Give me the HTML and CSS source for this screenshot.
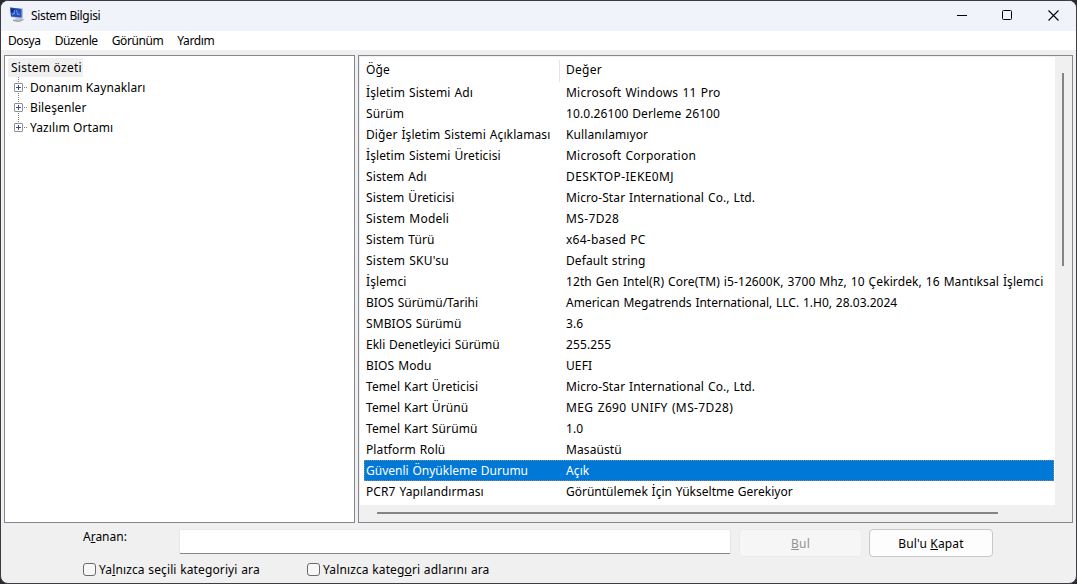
FILE: index.html
```html
<!DOCTYPE html>
<html lang="tr">
<head>
    <meta charset="UTF-8">
    <meta name="viewport" content="width=device-width, initial-scale=1.0">
    <title>Sistem Bilgisi</title>
    <link rel="stylesheet" href="styles.css">
</head>
<body>
    <div class="window">

        <!-- title bar -->
        <header class="titlebar">
            <svg class="app-icon" width="16" height="16" viewBox="0 0 16 16">
                <path d="M7 11l5-1 2.500 2.500-4 2.500-6-1z" fill="#c3c6cf"/>
                <path d="M4 12.500l6 1.300 4.500-1.800v1L10 15l-6-1z" fill="#9a9da8"/>
                <path d="M1 .5l11 1.500 2-1v9.500L12 12 2 10z" fill="#b4bdd6"/>
                <path d="M1 .5l11.500 1.300v8.700L2 9.500z" fill="#2450bd"/>
                <path d="M2 1.500l4 .5-1 4-3-1z" fill="#102a80"/>
                <path d="M5.500 3l-1 4.500M7.500 3.500l1 4 2.500-.5M3 7.500l3-1.500" stroke="#7fa3e8" stroke-width=".9" fill="none"/>
            </svg>
            <span class="title">Sistem Bilgisi</span>
            <div class="controls">
                <svg width="46" height="30" viewBox="0 0 46 30"><path d="M18 14.500h10" stroke="#000"/></svg>
                <svg width="46" height="30" viewBox="0 0 46 30"><rect x="17.500" y="9.500" width="9" height="9" rx="1" fill="none" stroke="#000"/></svg>
                <svg width="46" height="30" viewBox="0 0 46 30"><path d="M17.500 9.500l10 10M27.500 9.500l-10 10" stroke="#000" stroke-width="1.100"/></svg>
            </div>
        </header>

        <!-- menu -->
        <nav class="menu">
            <a>Dosya</a>
            <a>Düzenle</a>
            <a>Görünüm</a>
            <a>Yardım</a>
        </nav>

        <main class="panes">
            <!-- category tree -->
            <div class="tree">
                <span class="tree-root">Sistem özeti</span>
                <ul>
                    <li><i class="plus"></i><span>Donanım Kaynakları</span></li>
                    <li><i class="plus"></i><span>Bileşenler</span></li>
                    <li><i class="plus"></i><span>Yazılım Ortamı</span></li>
                </ul>
            </div>

            <!-- details list -->
            <div class="details">
                <div class="list">
                    <div class="row head"><span>Öğe</span><span class="loose">Değer</span></div>
                    <div class="row"><span>İşletim Sistemi Adı</span><span class="loose">Microsoft Windows 11 Pro</span></div>
                    <div class="row"><span>Sürüm</span><span>10.0.26100 Derleme 26100</span></div>
                    <div class="row"><span>Diğer İşletim Sistemi Açıklaması</span><span>Kullanılamıyor</span></div>
                    <div class="row"><span>İşletim Sistemi Üreticisi</span><span class="loose">Microsoft Corporation</span></div>
                    <div class="row"><span>Sistem Adı</span><span class="looser">DESKTOP-IEKE0MJ</span></div>
                    <div class="row"><span>Sistem Üreticisi</span><span>Micro-Star International Co., Ltd.</span></div>
                    <div class="row"><span class="loose">Sistem Modeli</span><span class="looser">MS-7D28</span></div>
                    <div class="row"><span>Sistem Türü</span><span class="loose">x64-based PC</span></div>
                    <div class="row"><span class="loose">Sistem SKU'su</span><span>Default string</span></div>
                    <div class="row"><span>İşlemci</span><span>12th Gen Intel(R) Core(TM) i5-12600K, 3700 Mhz, 10 Çekirdek, 16 Mantıksal İşlemci</span></div>
                    <div class="row"><span class="tight">BIOS Sürümü/Tarihi</span><span class="tight">American Megatrends International, LLC. 1.H0, 28.03.2024</span></div>
                    <div class="row"><span>SMBIOS Sürümü</span><span>3.6</span></div>
                    <div class="row"><span class="tight">Ekli Denetleyici Sürümü</span><span>255.255</span></div>
                    <div class="row"><span>BIOS Modu</span><span>UEFI</span></div>
                    <div class="row"><span>Temel Kart Üreticisi</span><span>Micro-Star International Co., Ltd.</span></div>
                    <div class="row"><span>Temel Kart Ürünü</span><span class="looser">MEG Z690 UNIFY (MS-7D28)</span></div>
                    <div class="row"><span>Temel Kart Sürümü</span><span>1.0</span></div>
                    <div class="row"><span>Platform Rolü</span><span>Masaüstü</span></div>
                    <div class="row selected"><span class="tight">Güvenli Önyükleme Durumu</span><span>Açık</span></div>
                    <div class="row"><span>PCR7 Yapılandırması</span><span class="tight">Görüntülemek İçin Yükseltme Gerekiyor</span></div>
                </div>
                <div class="scroll-y"><div class="thumb"></div></div>
                <div class="scroll-x"><div class="thumb"></div></div>
            </div>
        </main>

        <!-- search -->
        <form class="search">
            <label class="find-label" for="find">A<u>r</u>anan:</label>
            <input class="find" id="find" type="text">
            <button class="btn" type="button" disabled><u>B</u>ul</button>
            <button class="btn" type="button">Bul'u <u>K</u>apat</button>
            <div class="options">
                <label><input type="checkbox"><span>Ya<u>l</u>nızca seçili kategoriyi ara</span></label>
                <label><input type="checkbox"><span>Yalnızca kateg<u>o</u>ri adlarını ara</span></label>
            </div>
        </form>
    </div>
</body>
</html>
```
FILE: styles.css
```css
* {
    box-sizing: border-box;
}

body {
    margin: 0;
    background-color: #2b2a30;
    font-family: "Noto Sans", sans-serif;
    font-size: 12px;
    color: #000;
    overflow: hidden;
}

.window {
    width: 1077px;
    height: 584px;
    display: flex;
    flex-direction: column;
    border: 1px solid #3c3c42;
    border-radius: 8px;
    background-color: #f0f0f0;
    overflow: hidden;
    white-space: nowrap;
}

/* title bar */
.titlebar {
    height: 30px;
    flex: none;
    display: flex;
    align-items: center;
    padding-left: 8px;
    background-color: #f0f3f9;
}

.app-icon {
    margin-bottom: 2px;
}

.title {
    margin-left: 6px;
    padding-bottom: 2px;
    letter-spacing: -0.35px;
}

.controls {
    display: flex;
    margin-left: auto;
    margin-right: -1px;
}

/* menu */
.menu {
    height: 19px;
    flex: none;
    display: flex;
    align-items: center;
    gap: 14px;
    padding-left: 7px;
    background-color: #fff;
    letter-spacing: -0.4px;
}

/* panes */
.panes {
    height: 468px;
    flex: none;
    display: flex;
    gap: 3px;
    margin: 5px 3px 0;
}

.tree,
.details {
    border: 1px solid #828790;
    background-color: #fff;
}

.tree {
    width: 351px;
    padding: 2px 0 0 3px;
    letter-spacing: 0.1px;
}

.tree-root {
    display: block;
    width: 75px;
    height: 19px;
    line-height: 20px;
    padding-left: 3px;
    background-color: #f0f0f0;
    letter-spacing: 0.25px;
}

.tree ul {
    margin: 0;
    padding: 0;
    list-style: none;
}

.tree li {
    height: 20px;
    display: flex;
    align-items: center;
    padding-left: 6px;
    background: repeating-linear-gradient(#808080 0 1px, transparent 1px 2px) 10px 0 / 1px 100% no-repeat;
}

.tree li:last-child {
    background-size: 1px 10px;
}

.plus {
    width: 9px;
    height: 9px;
    flex: none;
    border: 1px solid #919191;
    border-radius: 1px;
    background:
        linear-gradient(#3b4a9b, #3b4a9b) center / 5px 1px no-repeat,
        linear-gradient(#3b4a9b, #3b4a9b) center / 1px 5px no-repeat,
        #fff;
}

.plus + span {
    padding-left: 7px;
    background: repeating-linear-gradient(90deg, transparent 0 1px, #808080 1px 2px) 0 center / 4px 1px no-repeat;
}

.details {
    flex: 1;
    display: grid;
    grid-template-columns: 1fr 16px;
    grid-template-rows: 1fr 16px;
    padding: 1px;
    background-clip: content-box;
}

.list {
    padding: 3px 1px 0 4px;
    overflow: hidden;
    letter-spacing: 0.1px;
    word-spacing: 0.7px;
}

.row {
    height: 21px;
    line-height: 22px;
    display: flex;
    padding-left: 2px;
}

.row span:first-child {
    width: 200px;
    flex: none;
}

.tight {
    letter-spacing: 0;
}

.loose {
    letter-spacing: 0.24px;
}

.looser {
    letter-spacing: 0.38px;
}

.head {
    height: 22px;
    line-height: 20px;
    background: linear-gradient(#e5e5e5, #e5e5e5) 195px 0 / 1px 100% no-repeat;
}

.selected {
    background-color: #0078d7;
    color: #fff;
    outline: 1px dotted #7d8f8c;
    outline-offset: -1px;
}

.scroll-y,
.scroll-x {
    background-color: #f0f0f0;
}

.scroll-y .thumb {
    width: 2px;
    height: 193px;
    margin: 16px 0 0 7px;
    background-color: #858585;
}

.scroll-x {
    grid-column: 1 / 3;
}

.scroll-x .thumb {
    width: 621px;
    height: 2px;
    margin: 7px 0 0 17px;
    background-color: #858585;
}

/* search */
.search {
    display: grid;
    grid-template-columns: 96px 553px 130px 131px;
    grid-template-rows: 28px 22px;
    padding: 6px 0 0 82px;
}

.find-label {
    line-height: 16px;
}

.find {
    width: 552px;
    height: 25px;
    border: 1px solid #e8e8e8;
    border-bottom-color: #868686;
    border-radius: 2px;
    background-color: #fff;
}

.btn {
    height: 28px;
    border: 1px solid #c8c8c8;
    border-radius: 4px;
    background-color: #fdfdfd;
    font: inherit;
    color: #000;
    padding: 0;
    margin-left: 7px;
    letter-spacing: 0.15px;
}

.btn:disabled {
    border-color: #ebebeb;
    background-color: #f6f6f6;
    color: #929292;
}

.options {
    grid-column: 1 / -1;
    display: flex;
}

.options label {
    width: 224px;
    display: flex;
    align-items: center;
    padding-top: 2px;
    letter-spacing: 0.12px;
    word-spacing: 0.4px;
}

.options input {
    appearance: none;
    width: 13px;
    height: 13px;
    margin: 0 3px 0 0;
    border: 1px solid #6b6b6b;
    border-radius: 3px;
    background-color: #f7f7f7;
}
```
